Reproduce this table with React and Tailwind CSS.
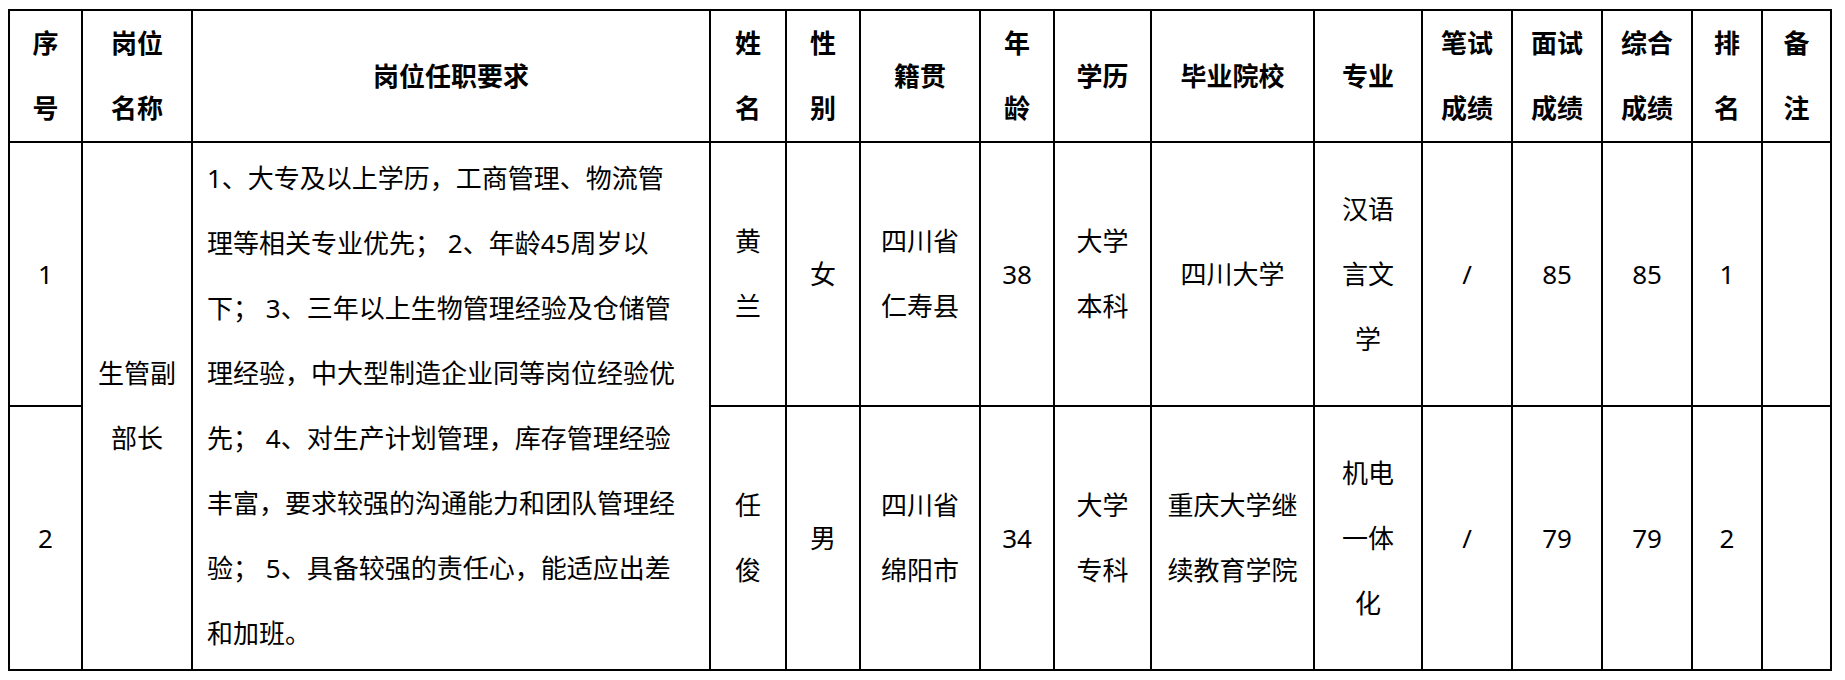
import React from "react";

const cols = [73, 110, 518, 76, 74, 120, 74, 97, 163, 108, 90, 90, 90, 70, 69];

const headers = [
  ["序", "号"],
  ["岗位", "名称"],
  ["岗位任职要求"],
  ["姓", "名"],
  ["性", "别"],
  ["籍贯"],
  ["年", "龄"],
  ["学历"],
  ["毕业院校"],
  ["专业"],
  ["笔试", "成绩"],
  ["面试", "成绩"],
  ["综合", "成绩"],
  ["排", "名"],
  ["备", "注"],
];

const duty = [
  "1、大专及以上学历，工商管理、物流管",
  "理等相关专业优先； 2、年龄45周岁以",
  "下； 3、三年以上生物管理经验及仓储管",
  "理经验，中大型制造企业同等岗位经验优",
  "先； 4、对生产计划管理，库存管理经验",
  "丰富，要求较强的沟通能力和团队管理经",
  "验； 5、具备较强的责任心，能适应出差",
  "和加班。",
];

const rows = [
  {
    no: "1",
    name: ["黄", "兰"],
    sex: ["女"],
    origin: ["四川省", "仁寿县"],
    age: ["38"],
    edu: ["大学", "本科"],
    school: ["四川大学"],
    major: ["汉语", "言文", "学"],
    written: ["/"],
    interview: ["85"],
    total: ["85"],
    rank: ["1"],
  },
  {
    no: "2",
    name: ["任", "俊"],
    sex: ["男"],
    origin: ["四川省", "绵阳市"],
    age: ["34"],
    edu: ["大学", "专科"],
    school: ["重庆大学继", "续教育学院"],
    major: ["机电", "一体", "化"],
    written: ["/"],
    interview: ["79"],
    total: ["79"],
    rank: ["2"],
  },
];

const Lines = ({ lines }) =>
  lines.map((l, i) => (
    <div key={i} className="whitespace-nowrap">
      {l}
    </div>
  ));

const cell = "border-2 border-black text-center align-middle p-0";

export default function App() {
  return (
    <div
      className="bg-white w-[1845px] h-[680px] pl-[8px] pt-[9px] text-black text-[26px] leading-[65px]"
      style={{ fontFamily: '"Noto Sans", "Noto Sans CJK SC", sans-serif' }}
    >
      <table className="border-collapse table-fixed w-[1824px]">
        <colgroup>
          {cols.map((w, i) => (
            <col key={i} style={{ width: w }} />
          ))}
        </colgroup>
        <thead>
          <tr className="h-[132px]">
            {headers.map((h, i) => (
              <th key={i} className={`${cell} font-bold`}>
                <Lines lines={h} />
              </th>
            ))}
          </tr>
        </thead>
        <tbody>
          {rows.map((r, idx) => (
            <tr key={r.no} className="h-[264px]">
              <td className={cell}>{r.no}</td>
              {idx === 0 && (
                <>
                  <td rowSpan={2} className={cell}>
                    <Lines lines={["生管副", "部长"]} />
                  </td>
                  <td rowSpan={2} className="border-2 border-black text-left align-middle px-[14px] py-0">
                    <Lines lines={duty} />
                  </td>
                </>
              )}
              <td className={cell}>
                <Lines lines={r.name} />
              </td>
              <td className={cell}>
                <Lines lines={r.sex} />
              </td>
              <td className={cell}>
                <Lines lines={r.origin} />
              </td>
              <td className={cell}>
                <Lines lines={r.age} />
              </td>
              <td className={cell}>
                <Lines lines={r.edu} />
              </td>
              <td className={cell}>
                <Lines lines={r.school} />
              </td>
              <td className={cell}>
                <Lines lines={r.major} />
              </td>
              <td className={cell}>
                <Lines lines={r.written} />
              </td>
              <td className={cell}>
                <Lines lines={r.interview} />
              </td>
              <td className={cell}>
                <Lines lines={r.total} />
              </td>
              <td className={cell}>
                <Lines lines={r.rank} />
              </td>
              <td className={cell}></td>
            </tr>
          ))}
        </tbody>
      </table>
    </div>
  );
}
